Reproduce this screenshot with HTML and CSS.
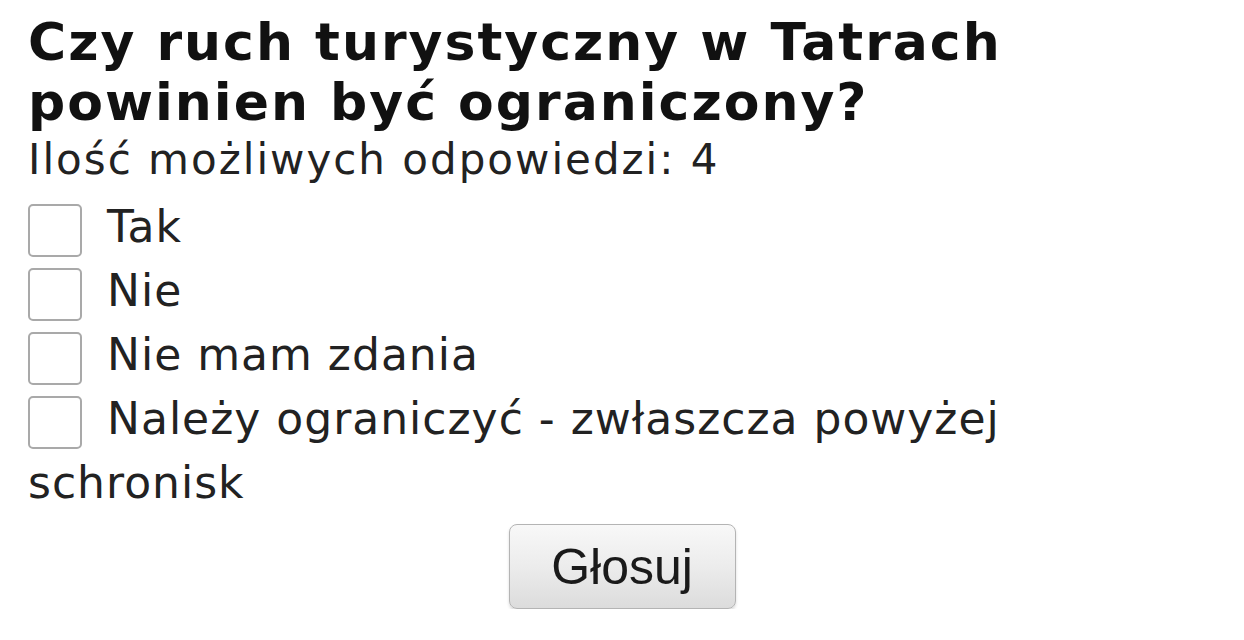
FILE: index.html
```html
<!DOCTYPE html>
<html lang="pl">
<head>
  <meta charset="UTF-8" />
  <meta name="viewport" content="width=device-width, initial-scale=1.0" />
  <title>Sonda</title>
  <link rel="stylesheet" href="styles.css">
</head>
<body>
  <form class="poll" onsubmit="return false">
    <h2 class="poll-title">Czy ruch turystyczny w Tatrach powinien być ograniczony?</h2>
    <p class="poll-info">Ilość możliwych odpowiedzi: 4</p>
    <div class="poll-options">
      <label class="poll-option"><input type="checkbox" name="odp" value="1">Tak</label>
      <label class="poll-option"><input type="checkbox" name="odp" value="2">Nie</label>
      <label class="poll-option"><input type="checkbox" name="odp" value="3">Nie mam zdania</label>
      <label class="poll-option"><input type="checkbox" name="odp" value="4">Należy ograniczyć - zwłaszcza powyżej schronisk</label>
    </div>
    <div class="poll-submit">
      <button type="submit">Głosuj</button>
    </div>
  </form>
</body>
</html>
```

FILE: styles.css
```css
body {
  margin: 0;
  background: #fff;
  color: #222;
  font-family: "DejaVu Sans", Verdana, sans-serif;
}
.poll {
  padding: 12px 28px 0;
}
.poll-title {
  margin: 0;
  max-width: 995px;
  font-size: 52px;
  line-height: 60px;
  font-weight: bold;
  letter-spacing: 2px;
  color: #111;
}
.poll-info {
  margin: 5px 0 0;
  max-width: 995px;
  font-size: 42px;
  line-height: 46px;
  letter-spacing: 2px;
}
.poll-options {
  margin-top: 12px;
  max-width: 995px;
}
.poll-option {
  display: block;
  font-size: 44px;
  line-height: 64px;
  letter-spacing: 1px;
}
.poll-option input {
  appearance: none;
  -webkit-appearance: none;
  display: inline-block;
  width: 54px;
  height: 53px;
  margin: 0 25px 0 0;
  vertical-align: -15px;
  border: 2px solid #a9a9a9;
  border-radius: 5px;
  background: #fff;
  box-sizing: border-box;
}
.poll-submit {
  margin-top: 9px;
  text-align: center;
}
.poll-submit button {
  width: 227px;
  height: 85px;
  padding: 0;
  border: 1px solid #b4b4b4;
  border-radius: 8px;
  background: linear-gradient(#f8f8f8, #ececec 50%, #dcdcdc);
  box-shadow: 0 2px 3px rgba(0, 0, 0, 0.15);
  font-family: "Liberation Sans", Arial, sans-serif;
  font-size: 50px;
  line-height: 56px;
  color: #1a1a1a;
  cursor: pointer;
}
```
